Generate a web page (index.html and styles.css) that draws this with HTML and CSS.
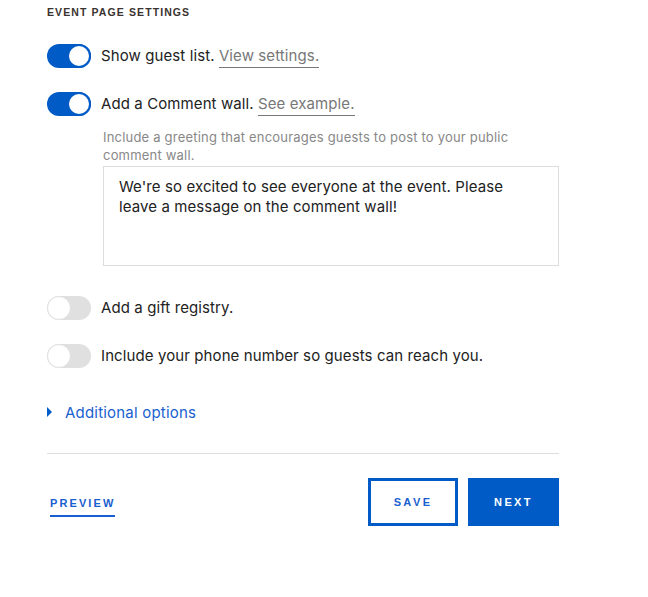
FILE: index.html
```html
<!DOCTYPE html>
<html>
<head>
<meta charset="utf-8">
<link rel="stylesheet" href="styles.css">
</head>
<body>
<div class="page">
  <h2 class="title">EVENT PAGE SETTINGS</h2>
  <div class="row row-first">
    <span class="toggle on"><span class="knob"></span></span>
    <span class="label">Show guest list. <a class="sublink">View settings.</a></span>
  </div>
  <div class="row">
    <span class="toggle on"><span class="knob"></span></span>
    <span class="label">Add a Comment wall. <a class="sublink">See example.</a></span>
  </div>
  <div class="comment-block">
    <p class="helper">Include a greeting that encourages guests to post to your public comment wall.</p>
    <div class="textbox">We're so excited to see everyone at the event. Please leave a message on the comment wall!</div>
  </div>
  <div class="row row-gift">
    <span class="toggle"><span class="knob"></span></span>
    <span class="label">Add a gift registry.</span>
  </div>
  <div class="row">
    <span class="toggle"><span class="knob"></span></span>
    <span class="label">Include your phone number so guests can reach you.</span>
  </div>
  <div class="additional">
    <span class="caret"></span>
    <span class="add-text">Additional options</span>
  </div>
  <hr class="divider">
  <div class="actions">
    <a class="preview">PREVIEW</a>
    <div class="buttons">
      <button class="btn btn-outline">SAVE</button>
      <button class="btn btn-solid">NEXT</button>
    </div>
  </div>
</div>
</body>
</html>
```
FILE: styles.css
```css
* { box-sizing: border-box; }
html, body { margin: 0; padding: 0; background: #fff; }
body {
  font-family: Inter, "Liberation Sans", Arial, sans-serif;
  color: #222;
}
.page {
  width: 512px;
  margin-left: 47px;
  padding-top: 6px;
}
.title {
  margin: 0;
  font-family: "Liberation Sans", Arial, sans-serif;
  font-size: 10.5px;
  font-weight: bold;
  letter-spacing: 1.1px;
  color: #3a3330;
  line-height: 13px;
}
.row {
  display: flex;
  align-items: center;
  height: 24px;
  margin-top: 24px;
}
.row-first { margin-top: 25px; }
.row-gift { margin-top: 30px; }
.toggle {
  position: relative;
  flex: none;
  width: 44px;
  height: 24px;
  border-radius: 12px;
  background: #e0e0e0;
  margin-right: 10px;
}
.toggle.on { background: #005bc6; }
.knob {
  position: absolute;
  top: 0;
  left: 0;
  width: 24px;
  height: 24px;
  border-radius: 50%;
  background: #fff;
  border: 1px solid #e0e0e0;
}
.toggle.on .knob {
  left: 20px;
  border: 2px solid #005bc6;
}
.label {
  font-size: 15px;
  letter-spacing: 0.1px;
  color: #222;
  line-height: 20px;
}
.sublink {
  color: #777;
  border-bottom: 1px solid #777;
  padding-bottom: 2px;
}
.comment-block {
  margin-left: 56px;
  margin-top: 12px;
}
.helper {
  margin: 0;
  font-size: 13px;
  letter-spacing: 0.2px;
  line-height: 18px;
  color: #888;
  width: 440px;
}
.textbox {
  margin-top: 2px;
  width: 456px;
  height: 100px;
  border: 1px solid #dcdcdc;
  padding: 10px 40px 10px 15px;
  font-size: 15px;
  letter-spacing: 0.1px;
  line-height: 20px;
  color: #222;
}
.additional {
  display: flex;
  align-items: center;
  margin-top: 34px;
  height: 20px;
}
.caret {
  width: 0;
  height: 0;
  border-top: 5px solid transparent;
  border-bottom: 5px solid transparent;
  border-left: 5px solid #005bc6;
  margin-right: 13px;
}
.add-text {
  font-size: 15px;
  letter-spacing: 0.2px;
  color: #1a5fcf;
}
.divider {
  margin: 31px 0 0 0;
  border: 0;
  border-top: 1px solid #dddddd;
  height: 0;
}
.actions {
  display: flex;
  justify-content: space-between;
  align-items: center;
  margin-top: 24px;
}
.preview {
  margin-left: 3px;
  margin-top: 9px;
  font-family: "Liberation Sans", Arial, sans-serif;
  font-size: 11px;
  line-height: 13px;
  font-weight: bold;
  letter-spacing: 2.1px;
  color: #1a5fcf;
  border-bottom: 2px solid #1a5fcf;
  padding-bottom: 5px;
}
.buttons {
  display: flex;
  gap: 10px;
}
.btn {
  height: 48px;
  font-family: "Liberation Sans", Arial, sans-serif;
  font-size: 11px;
  font-weight: bold;
  letter-spacing: 2.4px;
  cursor: pointer;
}
.btn-outline {
  width: 90px;
  background: #fff;
  border: 3px solid #005bc6;
  color: #1a5fcf;
}
.btn-solid {
  width: 91px;
  background: #005bc6;
  border: 0;
  color: #fff;
}
```
